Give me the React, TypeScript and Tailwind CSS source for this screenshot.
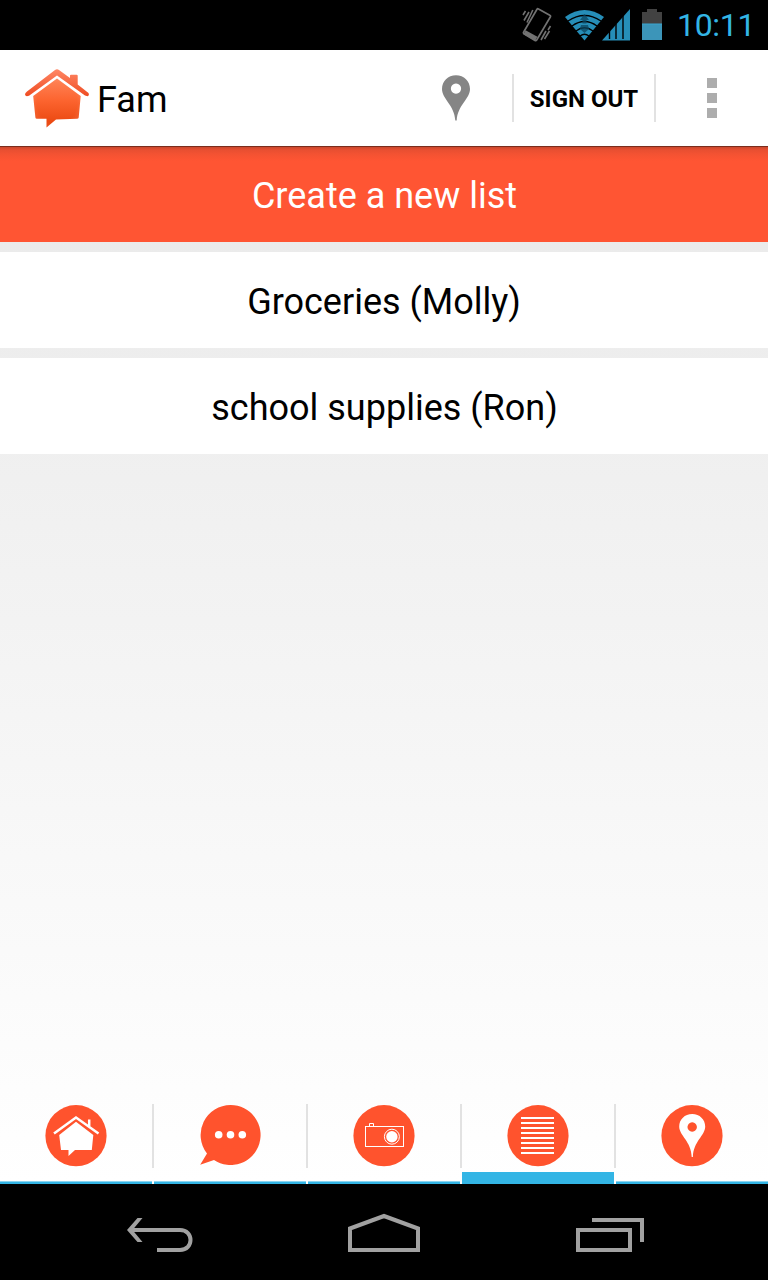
import React from "react";

function StatusBar() {
  return (
    <header className="flex h-[50px] items-start bg-black pl-[522px] text-[#33b5e5]">
      <svg width="30" height="50" viewBox="522 0 30 50" fill="none" stroke="#727272" strokeWidth="1.7">
        <path d="M537 9.2 Q537.6 8.4 538.5 9 L549.8 15.2 Q551 15.8 550.3 17 L536.7 40 Q536 41 535 40.4 L524 33.8 Q523 33 523.7 32 Z" />
        <path d="M524.5 32.2 L536.3 38.8" strokeWidth="4.5" />
        <path d="M523 15 L525.5 11 M524 20.5 L529 12 M527 22.5 L532.8 10 M550.5 26 L548 30 M549.5 31 L544.5 39 M546 31 L541 40" strokeWidth="1.6" />
      </svg>
      <svg className="ml-[13px]" width="39" height="50" viewBox="565 0 39 50">
        <path d="M565 17 Q584.500 3 604 17 L584.500 40.500Z" fill="#268eb8" />
        <path d="M568 21 Q584.500 10 601 21 M572 26 Q584.500 17 597 26 M576 31 Q584.500 24.500 593 31 M580 36 Q584.500 32.500 589 36" fill="none" stroke="#000" strokeWidth="1.3" />
        <path d="M584.500 14 L589 20 H586.500 V23.500 H582.500 V20 H580Z M581 25 H588 L589 29 L584.500 33 L580 29Z" fill="#0b4660" opacity=".75" />
      </svg>
      <svg className="-ml-[2px]" width="28" height="50" viewBox="602 0 28 50">
        <path d="M602 40.500 L630 9 V40.500Z" fill="#268eb8" />
        <path d="M609.500 30 V39 M616 24 V39 M623 15 V39" stroke="#000" strokeWidth="1.400" />
      </svg>
      <svg className="ml-[12px]" width="20" height="50" viewBox="642 0 20 50">
        <path d="M642 12 H647 V9 H657 V12 H662 V24 H642Z" fill="#424242" />
        <path d="M642 24 H662 V40 H642Z" fill="#3c95b9" />
        <path d="M642 24 H662" stroke="#38a5d0" />
      </svg>
      <span className="ml-[15px] text-[32px] leading-[50px] tracking-[-0.3px]">10:11</span>
    </header>
  );
}

function Logo() {
  return (
    <svg width="66" height="96" viewBox="24 50 66 96">
      <defs>
        <linearGradient id="roof" x1="0" y1="0" x2="0" y2="1">
          <stop offset="0" stopColor="#ff8765" />
          <stop offset="1" stopColor="#ef4c22" />
        </linearGradient>
        <linearGradient id="body" x1="0" y1="0" x2="0" y2="1">
          <stop offset="0" stopColor="#ff8458" />
          <stop offset=".45" stopColor="#fc642f" />
          <stop offset="1" stopColor="#e7430b" />
        </linearGradient>
        <radialGradient id="glow" cx=".5" cy=".5" r=".6">
          <stop offset=".7" stopColor="#fff" stopOpacity="0" />
          <stop offset="1" stopColor="#fff" stopOpacity=".12" />
        </radialGradient>
      </defs>
      <path d="M70 75.500 Q70 74.700 71 74.700 H76.700 Q77.700 74.700 77.700 75.700 V84.500 L88.500 93 Q89.700 95.500 87.500 96.300 L85 95.500 L57 75.500 L29 95.700 Q25.500 97 25 94.500 Q25 93 27 91.500 L55 70 Q57 68.500 59 70 L70 78Z" fill="url(#roof)" />
      <path d="M57 78.500 L80.700 96 L78.700 117.500 Q78.500 118.800 77 118.800 L56 119.500 L46.500 127.500 V118.800 H37 Q35.500 118.800 35.400 117.500 L33.200 96Z" fill="url(#body)" />
      <path d="M57 78.500 L80.700 96 L78.700 118.800 L56 119.500 L46.500 127.500 V118.800 H35.500 L33.200 96Z" fill="url(#glow)" />
    </svg>
  );
}

function ActionBar() {
  return (
    <div className="flex h-24 items-center bg-white pl-6">
      <Logo />
      <h1 className="ml-[7px] w-[345px] pt-1 text-[36px] leading-[48px]">Fam</h1>
      <svg width="28" height="96" viewBox="442 50 28 96">
        <path fillRule="evenodd" d="M456 75.200 C448 75.200 442 81 442 89 C442 99 454.500 105 455.300 120.500 H456.700 C457.500 105 470 99 470 89 C470 81 464 75.200 456 75.200Z M456 83.500 A5.100 5.100 0 1 1 455.990 83.500Z" fill="#858585" />
      </svg>
      <button className="ml-[42px] h-12 w-36 border-x-2 border-[#e2e2e2] text-center text-[24px] leading-[50px] font-bold whitespace-nowrap">
        SIGN OUT
      </button>
      <div className="ml-[51px] flex flex-col gap-[5px]">
        <i className="size-2.5 bg-[#adadad]" />
        <i className="size-2.5 bg-[#adadad]" />
        <i className="size-2.5 bg-[#adadad]" />
      </div>
    </div>
  );
}

function TabIcon({ kind }: { kind: string }) {
  return (
    <svg width="62" height="62" viewBox="-31 -31 62 62">
      {kind === "chat" ? (
        <path d="M.7 -31 A30 30 0 1 1 -16 24 L-29.800 28.700 L-23 17.500 A30 30 0 0 1 .7 -31Z" fill="#ff532d" />
      ) : (
        <circle cy="-.3" r="30.600" fill="#ff532d" />
      )}
      {kind === "home" && (
        <>
          <path d="M-22 -2.500 L0 -18.500 L22.500 -2.500 M13.200 -9 V-16.500" fill="none" stroke="#fff" strokeWidth="2.500" />
          <path d="M0 -14.200 L17.300 -1 L15.800 14 H-1 L-7.500 20 V14 H-15 L-16.800 -1Z" fill="#fff" />
        </>
      )}
      {kind === "chat" && (
        <g fill="#fff">
          <circle cx="-11.300" cy="-1.300" r="3.800" />
          <circle cx=".5" cy="-1.300" r="3.800" />
          <circle cx="12.300" cy="-1.300" r="3.800" />
        </g>
      )}
      {kind === "camera" && (
        <g fill="none" stroke="#fff">
          <rect x="-18.500" y="-9.500" width="38" height="20" />
          <path d="M-14.500 -9.500 V-12.500 H-10.500 V-9.500" />
          <circle cx="7.900" cy=".7" r="7.500" />
          <circle cx="7.900" cy=".7" r="5.700" fill="#fff" stroke="none" />
        </g>
      )}
      {kind === "list" && (
        <path d="M-17 -18 H16 M-17 -13 H16 M-17 -8 H16 M-17 -3 H16 M-17 2 H16 M-17 7 H16 M-17 12 H16 M-17 17 H16" stroke="#fff" strokeWidth="2" />
      )}
      {kind === "place" && (
        <path fillRule="evenodd" d="M.2 -22 C-7.300 -22 -12.800 -16.500 -12.800 -9.500 C-12.800 -.5 -.5 5.500 -.3 21 H.9 C1.200 5.500 13.200 -.5 13.200 -9.500 C13.200 -16.500 7.700 -22 .2 -22Z M.2 -13.700 A4.700 4.700 0 1 1 .19 -13.700Z" fill="#fff" />
      )}
    </svg>
  );
}

const tabs = ["home", "chat", "camera", "list", "place"];

function TabBar() {
  return (
    <nav className="flex h-24">
      {tabs.map((kind, i) => (
        <React.Fragment key={kind}>
          {i > 0 && <div className="mt-4 h-16 w-0.5 bg-[#e2e2e2]" />}
          <button className="flex w-[152px] flex-col items-center justify-between pt-[17px]">
            <TabIcon kind={kind} />
            <span
              className={
                kind === "list"
                  ? "h-3 w-full bg-[#33b5e5]"
                  : "h-[3px] w-full border-t border-[#8dd5f0] bg-[#33b5e5]"
              }
            />
          </button>
        </React.Fragment>
      ))}
    </nav>
  );
}

function NavigationBar() {
  return (
    <footer className="flex h-24 items-start bg-black pl-[126px]">
      <svg width="68" height="96" viewBox="126 1184 68 96" fill="none" stroke="#a1a1a1" strokeWidth="4">
        <path d="M131 1230 H180 C194 1230 194 1250 180 1250 H157" />
        <path d="M137.500 1218 H142.500 L132.500 1230 L142.500 1242 H137.500 L127 1230Z" fill="#a1a1a1" stroke="none" />
      </svg>
      <svg className="ml-[154px]" width="72" height="96" viewBox="348 1184 72 96">
        <path d="M350 1250 V1228.500 L384 1216 L418 1228.500 V1250Z" fill="none" stroke="#a1a1a1" strokeWidth="4" />
      </svg>
      <svg className="ml-[156px]" width="68" height="96" viewBox="576 1184 68 96">
        <path d="M578 1230 H630 V1250 H578Z M592 1220 H642 V1242" fill="none" stroke="#a1a1a1" strokeWidth="4" />
      </svg>
    </footer>
  );
}

export default function App() {
  return (
    <div className="flex h-[1280px] w-[768px] flex-col overflow-hidden bg-white font-['Roboto',sans-serif] text-black">
      <StatusBar />
      <ActionBar />
      <div className="flex min-h-0 flex-1 flex-col bg-linear-to-b from-[#e9e9e9] to-white">
        <main className="flex flex-1 flex-col gap-2.5 text-center text-[36px] leading-[96px]">
          <button className="h-24 bg-[linear-gradient(#7b2d1c_0px,#7b2d1c_1px,#c9482d_1px,#e84f31_4px,#f35232_8px,#ff5533_15px)] pt-0.5 pl-px text-white">
            Create a new list
          </button>
          <button className="h-24 bg-white pt-0.5">Groceries (Molly)</button>
          <button className="h-24 bg-white pt-0.5 pl-px">school supplies (Ron)</button>
        </main>
        <TabBar />
      </div>
      <NavigationBar />
    </div>
  );
}
